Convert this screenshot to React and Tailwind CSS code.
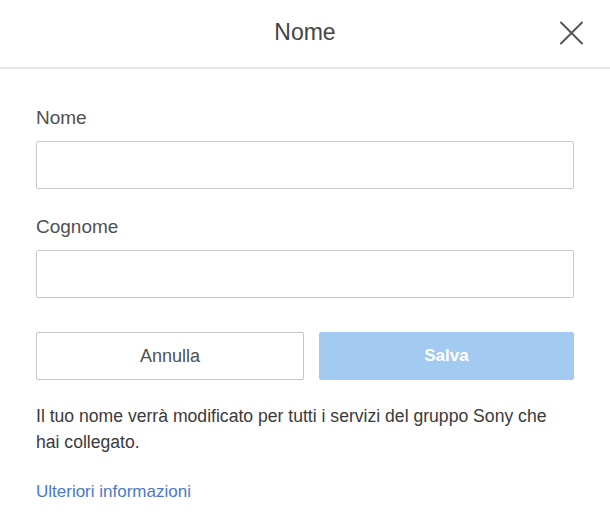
export default function App() {
  return (
    <div className="w-[610px] h-[514px] bg-white font-['Liberation_Sans',Arial,sans-serif] text-[#444]">
      <div className="relative h-[69px] border-b-2 border-[#e6e6e6] flex items-center justify-center">
        <h1 className="text-[23px] text-[#444] leading-none -mt-[2px]">Nome</h1>
        <button className="absolute right-[26px] top-[21px] w-[25px] h-[24px] text-[#555]" aria-label="Chiudi">
          <svg viewBox="0 0 25 24" width="25" height="24" fill="none" stroke="currentColor" strokeWidth="2" strokeLinecap="round">
            <path d="M2 1.5 L23 22.5 M23 1.5 L2 22.5" />
          </svg>
        </button>
      </div>

      <div className="px-[36px] pt-[37px]">
        <label className="block text-[19px] leading-[24px] text-[#505050]">Nome</label>
        <input className="mt-[11px] block w-full h-[48px] border border-[#cacaca] rounded-[2px] px-3 outline-none" />

        <label className="block mt-[26px] text-[19px] leading-[24px] text-[#505050]">Cognome</label>
        <input className="mt-[11px] block w-full h-[48px] border border-[#cacaca] rounded-[2px] px-3 outline-none" />

        <div className="mt-[34px] flex gap-[15px]">
          <button className="w-[268px] h-[48px] border border-[#c6c6c6] rounded-[2px] bg-white text-[18px] text-[#505050]">
            Annulla
          </button>
          <button className="flex-1 h-[48px] rounded-[2px] bg-[#a3caf0] text-[17px] font-bold text-white">
            Salva
          </button>
        </div>

        <p className="mt-[23px] max-w-[530px] text-[17.6px] leading-[26px] text-[#3a3a3a]">
          Il tuo nome verrà modificato per tutti i servizi del gruppo Sony che hai collegato.
        </p>

        <a href="#" className="block mt-[24px] text-[17px] leading-[26px] text-[#4a78c9]">
          Ulteriori informazioni
        </a>
      </div>
    </div>
  );
}
